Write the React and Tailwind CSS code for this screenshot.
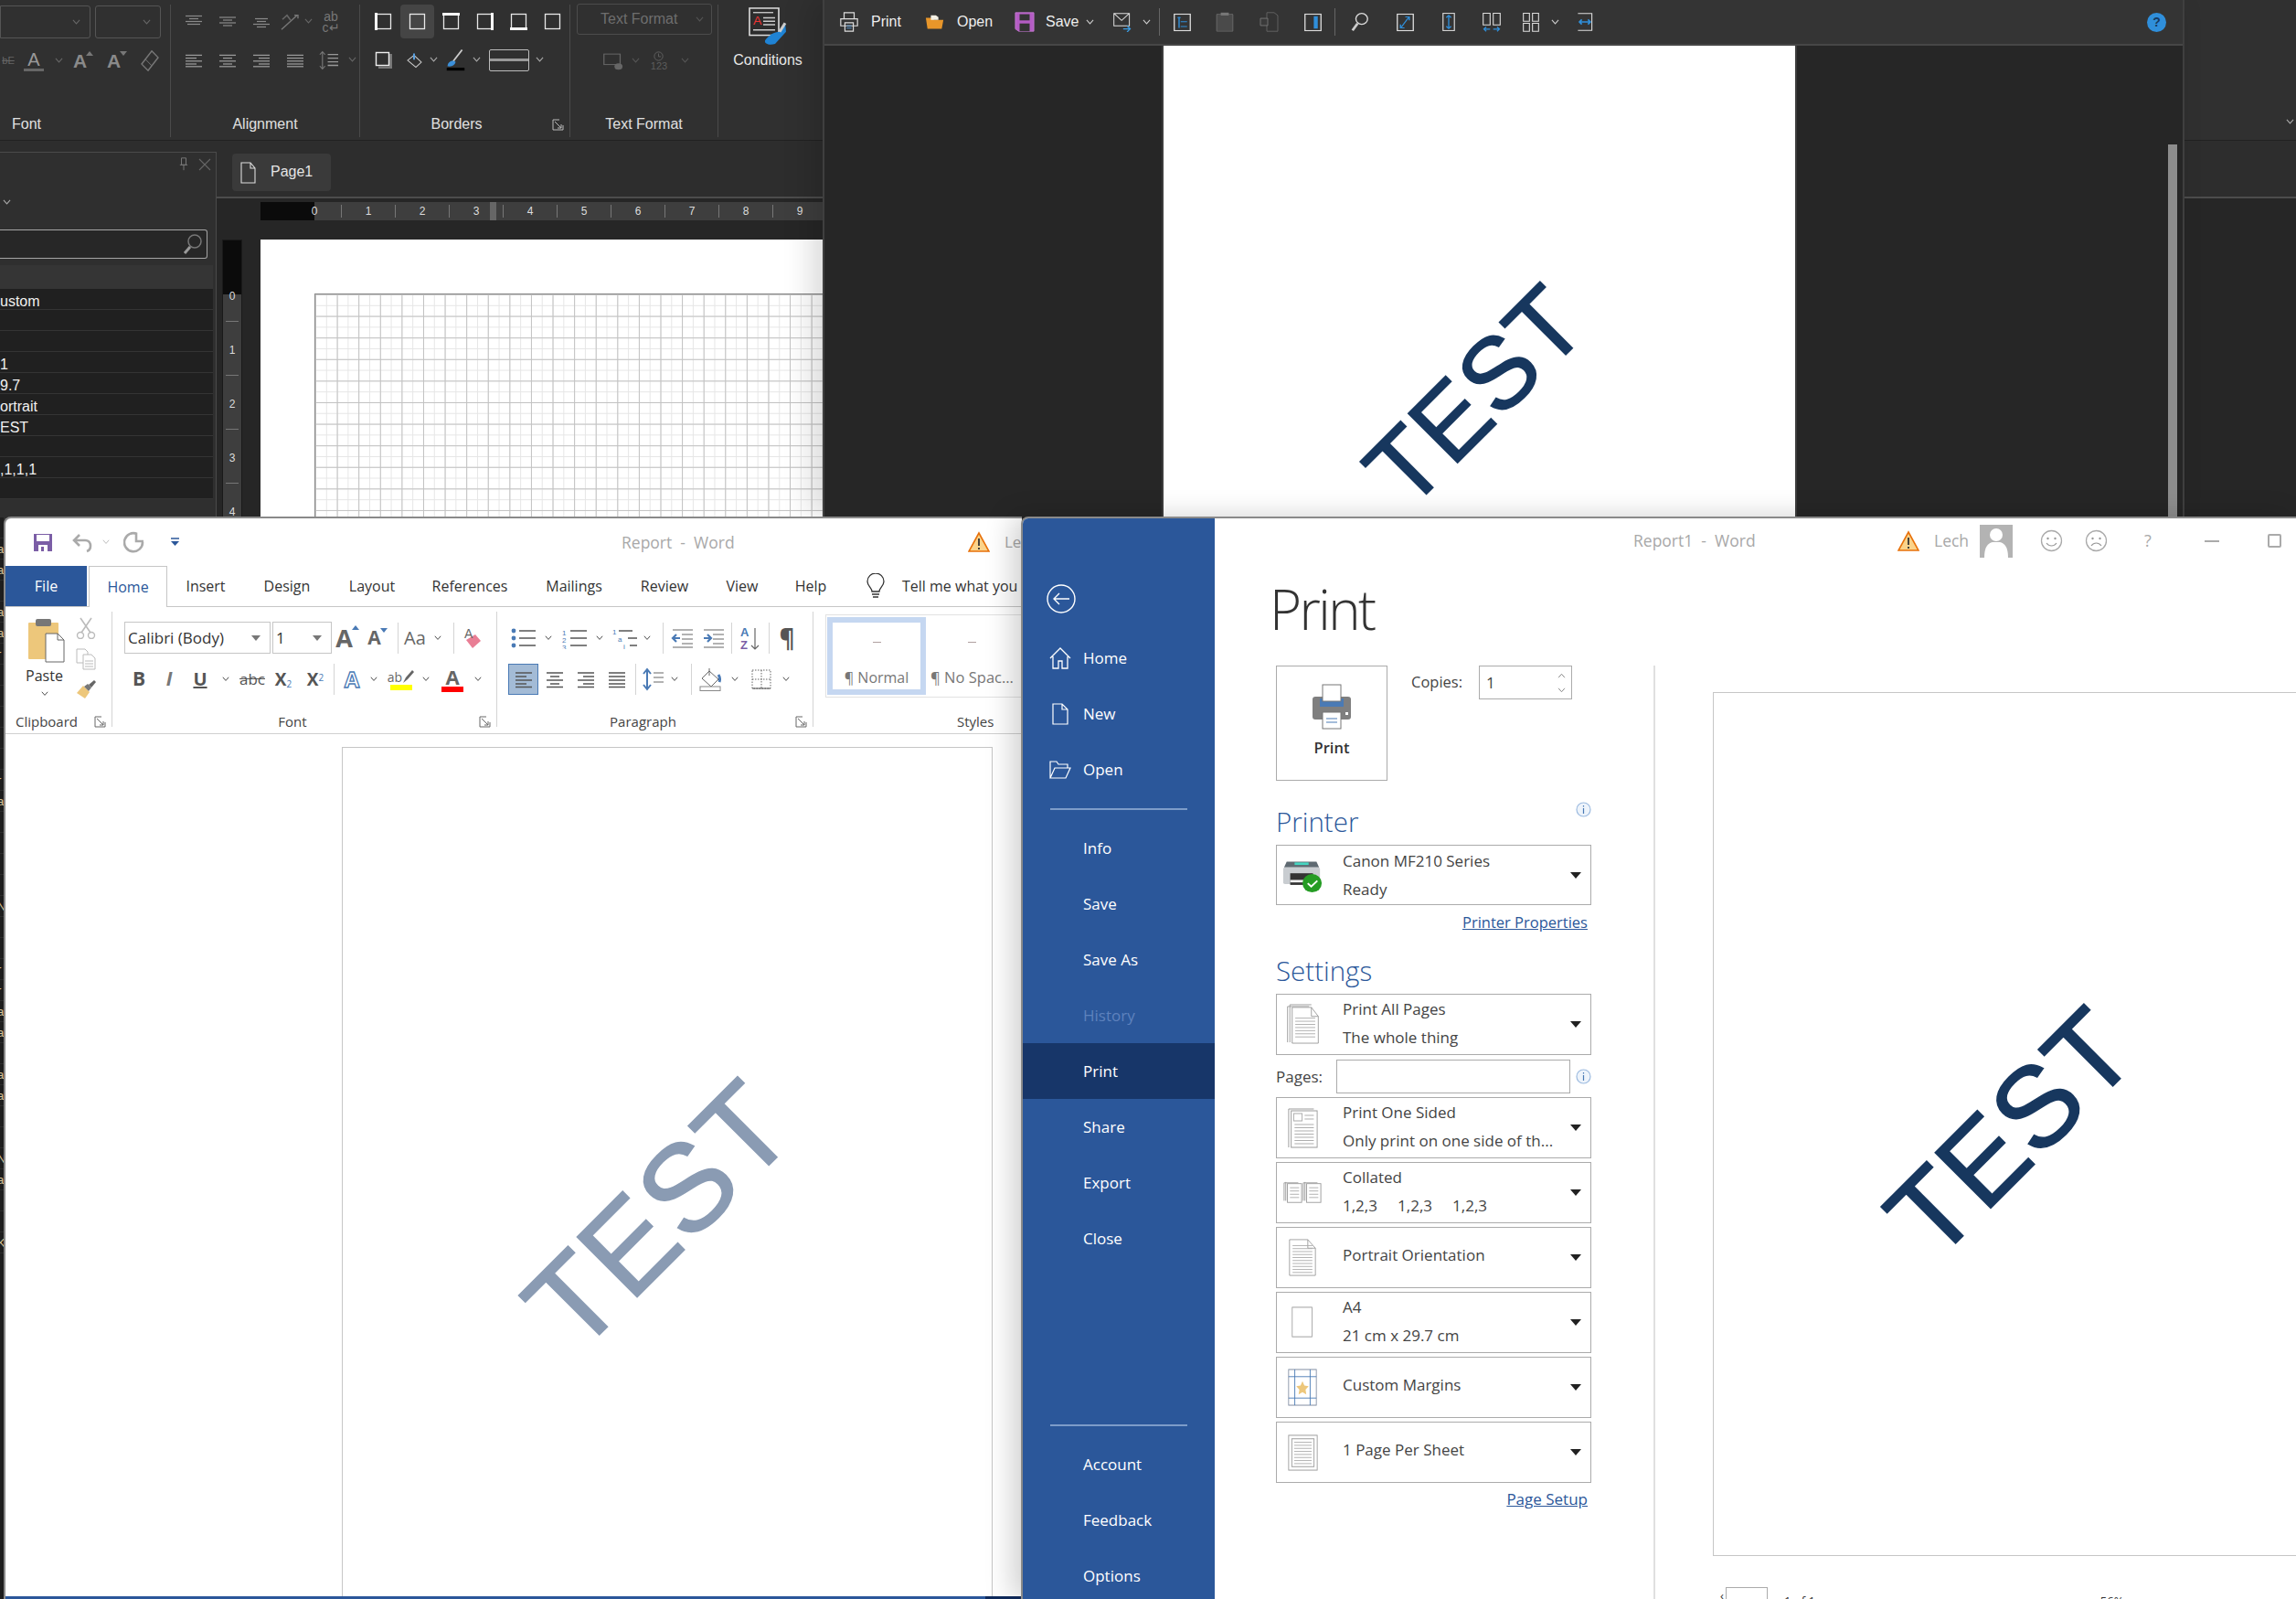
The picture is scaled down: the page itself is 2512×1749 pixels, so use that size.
import React from "react";

const Chev = ({ c = "#999", w = 9 }) => (
  <svg width={w} height={w * 0.7} viewBox="0 0 10 7" className="shrink-0"><path d="M1 1l4 4.5L9 1" fill="none" stroke={c} strokeWidth="1.2" /></svg>
);
const Cell = ({ w, children, className = "" }) => (
  <div className={`${w} h-full shrink-0 flex items-center justify-center ${className}`}>{children}</div>
);
const Lines = ({ rows, c = "#999", w = 22, h = 20, rh, sw = 1.6 }) => (
  <svg width={w} height={rh || h} viewBox={`0 0 ${w} ${h}`} preserveAspectRatio="none">
    {rows.map((r, i) => <path key={i} d={`M${r[0]} ${r[2]}H${r[1]}`} stroke={c} strokeWidth={sw} />)}
  </svg>
);
const aL = [[2, 20, 3], [2, 14, 7], [2, 20, 11], [2, 14, 15], [2, 20, 18.5]];
const aC = [[2, 20, 3], [6, 16, 7], [2, 20, 11], [6, 16, 15], [2, 20, 18.5]];
const aR = [[2, 20, 3], [8, 20, 7], [2, 20, 11], [8, 20, 15], [2, 20, 18.5]];
const aJ = [[2, 20, 3], [2, 20, 7], [2, 20, 11], [2, 20, 15], [2, 20, 18.5]];
const Launcher = ({ c = "#777" }) => (
  <svg width="13" height="13" viewBox="0 0 13 13"><path d="M1 12V1h7M3 3l7 7M10 6v4H6M1 12h11V7" fill="none" stroke={c} strokeWidth="1" /></svg>
);
const BorderBox = ({ bold = "" }) => (
  <svg width="19" height="19" viewBox="0 0 19 19"><rect x="1.5" y="1.5" width="16" height="16" fill="none" stroke="#e8e8e8" strokeWidth="1.3" />
    {bold === "l" && <path d="M1.5 0v19" stroke="#fff" strokeWidth="3" />}
    {bold === "t" && <path d="M0 1.5h19" stroke="#fff" strokeWidth="3" />}
    {bold === "b" && <path d="M0 17.5h19" stroke="#fff" strokeWidth="3" />}
    {bold === "r" && <path d="M17.5 0v19" stroke="#fff" strokeWidth="3" />}
  </svg>
);
const Sep = ({ h = "h-[36px]", c = "bg-[#d4d4d4]" }) => <div className={`w-px shrink-0 ${h} ${c}`} />;

const DGroup = ({ w, label, launcher, labelClass = "text-center", children }) => (
  <div className={`${w} h-[145px] shrink-0 border-r border-[#4a4a4a] flex flex-col relative`}>
    <div className="h-[118px] pt-[2px]">{children}</div>
    <div className="flex h-[26px] items-center text-[#e0e0e0] text-[16px]">
      <div className={`flex-1 ${labelClass}`}>{label}</div>
      {launcher && <div className="w-[26px] flex justify-center"><Launcher c="#bbb" /></div>}
    </div>
  </div>
);
const GrowA = ({ size, c = "#999", tri = "#4a7ab5", down }) => (
  <div className="flex items-start">
    <span className={`${size} leading-none font-bold`} style={{ color: c }}>A</span>
    <svg width="8" height="5" viewBox="0 0 8 5" className="-ml-[1px]"><path d={down ? "M0 0h8L4 5z" : "M4 0l4 5H0z"} fill={tri} /></svg>
  </div>
);

function DesignerRibbon() {
  return (
    <div className="h-[154px] bg-[#303030] border-b border-[#222] flex pt-[5px]">
      <DGroup w="w-[187px]" label="Font" labelClass="text-left pl-[13px]">
        <div className="flex h-[37px] gap-[5px] -mt-[1px]">
          <div className="w-[99px] h-[36px] border border-[#555] rounded-r-[3px] flex items-center justify-end pr-[10px]"><Chev c="#666" /></div>
          <div className="w-[72px] h-[36px] border border-[#555] rounded-[3px] flex items-center justify-end pr-[10px]"><Chev c="#666" /></div>
        </div>
        <div className="flex h-[37px] mt-[5px] items-center">
          <Cell w="w-[18px]"><span className="text-[#666] text-[11px] line-through">bE</span></Cell>
          <Cell w="w-[38px]">
            <div className="flex flex-col items-center text-[#999] text-[20px] leading-[20px]">A<div className="w-[22px] h-[3px] bg-[#666]" /></div>
          </Cell>
          <Cell w="w-[16px]"><Chev c="#666" /></Cell>
          <Cell w="w-[38px]"><GrowA size="text-[21px]" c="#8a8a8a" tri="#777" /></Cell>
          <Cell w="w-[36px]"><GrowA size="text-[21px]" c="#8a8a8a" tri="#777" down /></Cell>
          <Cell w="w-[36px]"><svg width="22" height="25" viewBox="0 0 22 28" preserveAspectRatio="none"><path d="M13 2l7 8L9 26l-7-8z" fill="none" stroke="#777" strokeWidth="1.5" /><path d="M6 12l7 8" stroke="#777" /></svg></Cell>
        </div>
      </DGroup>
      <DGroup w="w-[207px]" label="Alignment">
        <div className="flex h-[37px] pl-[6px] -mt-[2px]">
          <Cell w="w-[37px]"><Lines c="#8a8a8a" rh={15} rows={[[2, 20, 2], [6, 16, 6], [2, 20, 10], [4, 18, 14]]} /></Cell>
          <Cell w="w-[37px]"><Lines c="#8a8a8a" rh={15} rows={[[2, 20, 4], [6, 16, 8], [2, 20, 12], [6, 16, 16]]} /></Cell>
          <Cell w="w-[37px]"><Lines c="#8a8a8a" rh={15} rows={[[4, 18, 6], [6, 16, 10], [2, 20, 14], [6, 16, 18]]} /></Cell>
          <Cell w="w-[26px]"><svg width="22" height="20" viewBox="0 0 22 22" preserveAspectRatio="none"><path d="M2 20L19 3M16 3h4v4" fill="none" stroke="#777" strokeWidth="1.4" /><path d="M3 8l5-5 4 6" fill="none" stroke="#666" strokeWidth="1.6" /></svg></Cell>
          <Cell w="w-[14px]"><Chev c="#666" /></Cell>
          <Cell w="w-[36px]"><span className="text-[#777] text-[14px] leading-[12px] text-center">ab<br />c↵</span></Cell>
        </div>
        <div className="flex h-[37px] pl-[6px] mt-[5px]">
          <Cell w="w-[37px]"><Lines rh={16} rows={aL} /></Cell>
          <Cell w="w-[37px]"><Lines rh={16} rows={aC} /></Cell>
          <Cell w="w-[37px]"><Lines rh={16} rows={aR} /></Cell>
          <Cell w="w-[37px]"><Lines rh={16} rows={aJ} /></Cell>
          <Cell w="w-[37px]"><svg width="23" height="22" viewBox="0 0 24 28" preserveAspectRatio="none"><path d="M5 2v24M2 6l3-4 3 4M2 22l3 4 3-4" fill="none" stroke="#777" strokeWidth="1.2" /><path d="M11 6h12M11 11h12M11 16h12M11 21h12" stroke="#999" strokeWidth="1.6" /></svg></Cell>
          <Cell w="w-[14px]"><Chev c="#666" /></Cell>
        </div>
      </DGroup>
      <DGroup w="w-[230px]" label="Borders" launcher labelClass="text-center pl-[8px]">
        <div className="flex h-[37px] pl-[7px] -mt-[2px]">
          <Cell w="w-[37px]"><BorderBox bold="l" /></Cell>
          <Cell w="w-[37px]" className="bg-[#454545] rounded-[4px]"><BorderBox /></Cell>
          <Cell w="w-[37px]"><BorderBox bold="t" /></Cell>
          <Cell w="w-[37px]"><BorderBox bold="r" /></Cell>
          <Cell w="w-[37px]"><BorderBox bold="b" /></Cell>
          <Cell w="w-[37px]"><BorderBox /></Cell>
        </div>
        <div className="flex h-[37px] mt-[5px] pl-[7px]">
          <Cell w="w-[37px]"><svg width="19" height="19" viewBox="0 0 19 19"><path d="M17.5 3v15H4" fill="none" stroke="#777" strokeWidth="3" /><rect x="1.5" y="1.5" width="14" height="14" fill="none" stroke="#eee" strokeWidth="1.4" /></svg></Cell>
          <Cell w="w-[30px]"><svg width="18" height="18" viewBox="0 0 18 26" preserveAspectRatio="none"><path d="M9 5l8 11-6 8-9-11z" fill="none" stroke="#ccc" strokeWidth="1.2" /><path d="M9 2v10" stroke="#5aa0e0" strokeWidth="2" /></svg></Cell>
          <Cell w="w-[12px]"><Chev c="#aaa" /></Cell>
          <Cell w="w-[36px]"><svg width="23" height="25" viewBox="0 0 26 32" preserveAspectRatio="none"><path d="M21 2L10 18" stroke="#ccc" strokeWidth="2" /><path d="M3 25c0-6 6-10 10-6-1 4-4 7-10 6z" fill="#3b8fd9" /><rect x="2" y="27" width="22" height="4" fill="#000" /></svg></Cell>
          <Cell w="w-[10px]"><Chev c="#aaa" /></Cell>
          <div className="w-[44px] h-[24px] ml-[9px] self-center border border-[#bbb] rounded-[2px] flex items-center shrink-0"><div className="w-full h-[3px] bg-[#999]" /></div>
          <Cell w="w-[22px]"><Chev c="#aaa" /></Cell>
        </div>
      </DGroup>
      <DGroup w="w-[162px]" label="Text Format">
        <div className="ml-[7px] w-[148px] h-[34px] mt-[-3px] border border-[#4c4c4c] rounded-[3px] flex items-center justify-between pl-[25px] pr-[8px] text-[#6e6e6e] text-[16px]">Text Format<Chev c="#555" /></div>
        <div className="flex h-[37px] mt-[10px] pl-[26px]">
          <Cell w="w-[40px]"><svg width="23" height="20" viewBox="0 0 26 28" preserveAspectRatio="none"><rect x="2" y="3" width="20" height="16" fill="none" stroke="#666" strokeWidth="1.4" /><ellipse cx="20" cy="22" rx="5" ry="5" fill="#666" /></svg></Cell>
          <Cell w="w-[10px]"><Chev c="#555" /></Cell>
          <Cell w="w-[42px]"><div className="flex flex-col items-center text-[#5c5c5c] text-[11px] leading-[10px]"><svg width="13" height="11" viewBox="0 0 13 13"><circle cx="6.5" cy="6.5" r="5.5" fill="none" stroke="#666" /><path d="M6.5 3v4h3" fill="none" stroke="#666" /></svg>123</div></Cell>
          <Cell w="w-[14px]"><Chev c="#555" /></Cell>
        </div>
      </DGroup>
      <div className="w-[114px] shrink-0 flex flex-col items-center text-[#e8e8e8] text-[16px] pt-[3px] -ml-[3px]">
        <svg width="44" height="42" viewBox="0 0 44 44" preserveAspectRatio="none">
          <rect x="2" y="1" width="32" height="31" fill="#2d2d2d" stroke="#ddd" strokeWidth="1.6" />
          <path d="M6 6h22" stroke="#ccc" strokeWidth="1.4" /><text x="6" y="20" fontSize="14" fill="#e33" fontFamily="Liberation Sans">A</text>
          <path d="M17 12h13M17 16h13M17 20h13M6 26h24" stroke="#ccc" strokeWidth="1.6" />
          <path d="M41 18l1 10-12 14c-6 2-12 0-11-4 4-6 10-10 16-10z" fill="#1f83d4" /><path d="M41 18l-6 10" stroke="#ccc" strokeWidth="3" />
        </svg>
        <div className="mt-[4px]">Conditions</div>
      </div>
    </div>
  );
}

const panelRows = ["ustom", "", "", "1", "9.7", "ortrait", "EST", "", ",1,1,1", ""];

function Designer() {
  return (
    <div className="absolute left-0 top-0 w-[2512px] h-[1000px] bg-[#2d2d2d] font-['Liberation_Sans',sans-serif]">
      <DesignerRibbon />
      <div className="flex">
        <div className="w-[237px] shrink-0 mt-[12px] h-[800px] border-t border-r border-[#4a4a4a] bg-[#2f2f2f]">
          <div className="h-[25px] flex items-center justify-end pr-[5px] gap-[10px]">
            <svg width="12" height="15" viewBox="0 0 12 18"><path d="M3 1h6v9H3zM1 10h10M6 10v7" fill="none" stroke="#777" strokeWidth="1.2" /></svg>
            <svg width="14" height="14" viewBox="0 0 14 14"><path d="M1 1l12 12M13 1L1 13" stroke="#666" strokeWidth="1.1" /></svg>
          </div>
          <div className="h-[30px] pl-[3px] mt-[14px] flex items-center"><Chev c="#aaa" /></div>
          <div className="mt-[15px] mr-[9px] h-[32px] border border-l-0 border-[#a5a5a5] rounded-r-[3px] bg-[#272727] flex items-center justify-end pr-[3px]">
            <svg width="24" height="24" viewBox="0 0 24 24"><circle cx="14" cy="9" r="7" fill="none" stroke="#777" strokeWidth="1.5" /><path d="M9 15l-6 7" stroke="#999" strokeWidth="3" /></svg>
          </div>
          <div className="mt-[7px] mr-[3px] h-[26px] bg-[#353535]" />
          <div className="mr-[3px] bg-[#202020] text-[#f0f0f0] text-[16px]">
            {panelRows.map((r, i) => (
              <div key={i} className="h-[23px] border-b border-[#343434] leading-[27px] whitespace-nowrap">{r}</div>
            ))}
          </div>
        </div>
        <div className="flex-1 flex flex-col min-w-0">
          <div className="h-[63px] pl-[17px] pt-[14px] border-b-2 border-[#4c4c4c]">
            <div className="w-[108px] h-[41px] bg-[#3a3a3a] rounded-[4px] flex items-center pl-[9px] gap-[16px] text-[#e4e4e4] text-[16px]">
              <svg width="17" height="24" viewBox="0 0 17 24"><path d="M1 1h10l5 6v16H1zM11 1v6h5" fill="none" stroke="#ddd" strokeWidth="1.1" /></svg>
              <span className="-mt-[2px]">Page1</span>
            </div>
          </div>
          <div className="flex-1 bg-[#262626] pt-[4px]">
            <div className="ml-[48px] w-[660px] h-[20px] flex overflow-hidden text-[#ddd] text-[12px] bg-[#3e3e3e]">
              <div className="w-[59px] h-full bg-[#0b0b0b] shrink-0" />
              {[0, 1, 2, 3, 4, 5, 6, 7, 8, 9, 10].map((n) => (
                <div key={n} className="w-[59px] shrink-0 h-full relative flex items-center justify-center">
                  <div className="w-px h-[14px] bg-[#777]" />
                  <span className="absolute left-0 -translate-x-1/2">{n}</span>
                  {n === 3 && <div className="absolute left-[15px] top-0 w-[7px] h-full bg-[#666]" />}
                </div>
              ))}
            </div>
            <div className="flex mt-[21px]">
              <div className="ml-[6px] w-[22px] shrink-0 flex flex-col text-[#ddd] text-[12px] bg-[#3e3e3e] h-[320px] border border-[#1a1a1a]">
                <div className="h-[59px] bg-[#0b0b0b] shrink-0" />
                {[0, 1, 2, 3, 4].map((n) => (
                  <div key={n} className="h-[59px] shrink-0 relative flex items-center justify-center">
                    <div className="h-px w-[14px] bg-[#777]" />
                    <span className="absolute top-0 -translate-y-1/2 mt-[2px]">{n}</span>
                  </div>
                ))}
              </div>
              <div className="ml-[20px] w-[660px] shrink-0 h-[320px] bg-white pl-[59px] pt-[59px]">
                <div className="w-full h-full border-t border-l border-[#8a8a8a] bg-[linear-gradient(to_right,#c2c2c2_1px,transparent_1px),linear-gradient(to_bottom,#c2c2c2_1px,transparent_1px),linear-gradient(to_right,#e6e6e6_1px,transparent_1px),linear-gradient(to_bottom,#e6e6e6_1px,transparent_1px)] bg-[size:23.6px_23.6px,23.6px_23.6px,11.8px_11.8px,11.8px_11.8px]" />
              </div>
            </div>
          </div>
        </div>
      </div>
      <div className="absolute right-[2px] top-[130px]"><Chev c="#aaa" /></div>
    </div>
  );
}

const Blue = "#2f8fdb";
const V = ({ vb, w = 22, h = 22, children }) => (
  <svg width={w} height={h} viewBox={vb} preserveAspectRatio="none">{children}</svg>
);
const Rect = ({ c = "#ddd", children }) => (
  <V vb="0 0 24 28" w={21} h={21}>
    <rect x="2" y="2" width="20" height="24" fill="none" stroke={c} strokeWidth="1.5" />
    {children}
  </V>
);

function Viewer() {
  return (
    <div className="absolute left-[900px] top-0 w-[1490px] h-[566px] bg-[#262626] border-l-2 border-r-2 border-[#3f3f3f] shadow-[-12px_0_30px_rgba(0,0,0,0.15)] flex flex-col font-['Liberation_Sans',sans-serif]">
      <div className="h-[50px] shrink-0 bg-[#343434] border-b-2 border-[#464646] flex items-center text-[#eee] text-[16px]">
        <Cell w="w-[28px]" className="ml-[13px]"><V vb="0 0 24 26"><path d="M6 9V1h12v8M2 9h20v9H2zM7 14h10v11H7z" fill="#343434" stroke="#ddd" strokeWidth="1.3" /><path d="M9 18h6M9 21h6" stroke="#5aa0e0" /></V></Cell>
        <span className="ml-[10px] w-[50px]">Print</span>
        <Cell w="w-[26px]" className="ml-[7px]"><V vb="0 0 24 24" w={22} h={17}><path d="M1 5h8l2 3h11l-2 14H3z" fill="#e8962a" /><path d="M7 1h6l3 3v4H7z" fill="#f4f0e4" /></V></Cell>
        <span className="ml-[11px] w-[54px]">Open</span>
        <Cell w="w-[28px]" className="ml-[6px]"><V vb="0 0 24 26"><path d="M1 1h22v24H5l-4-3z" fill="#b45cc4" stroke="#c57bd0" /><rect x="6" y="3" width="12" height="8" fill="#343434" /><rect x="6" y="15" width="12" height="10" fill="#343434" /></V></Cell>
        <span className="ml-[9px] w-[36px]">Save</span>
        <Cell w="w-[13px]" className="ml-[6px]"><Chev c="#ccc" /></Cell>
        <Cell w="w-[28px]" className="ml-[15px]"><V vb="0 0 26 26"><path d="M2 2h20v16H2zM2 2l10 9 10-9" fill="none" stroke="#ddd" strokeWidth="1.2" /><path d="M14 22h8M19 18l4 4-4 4" fill="none" stroke="#3b9be0" strokeWidth="1.6" /></V></Cell>
        <Cell w="w-[14px]" className="ml-[5px]"><Chev c="#ccc" /></Cell>
        <div className="w-px h-[30px] bg-[#666] ml-[7px]" />
        <Cell w="w-[46px]" className="ml-[1px]"><Rect><path d="M8 6v16M6 7h4M10 13h8M10 20h8" stroke={Blue} strokeWidth="1.6" fill="none" /></Rect></Cell>
        <Cell w="w-[48px]"><V vb="0 0 20 28"><rect x="2" y="3" width="16" height="24" rx="1" fill="#4a4a4a" stroke="#666" /><rect x="6" y="1" width="8" height="4" fill="#777" /></V></Cell>
        <Cell w="w-[48px]"><V vb="0 0 22 28"><path d="M9 1h8l4 4v22H9z" fill="none" stroke="#666" /><path d="M2 9h8v10H2z" fill="#3a3a3a" stroke="#777" /></V></Cell>
        <Cell w="w-[48px]"><Rect><rect x="13" y="5" width="5" height="18" fill={Blue} /></Rect></Cell>
        <div className="w-px h-[30px] bg-[#666]" />
        <Cell w="w-[48px]" className="ml-[3px]"><V vb="0 0 24 26"><circle cx="14" cy="9" r="7" fill="none" stroke="#ddd" strokeWidth="1.5" /><path d="M9 15l-6 9" stroke="#ccc" strokeWidth="3" /></V></Cell>
        <Cell w="w-[50px]"><Rect><path d="M7 21l9-14M12 6h5v5M6 17v5h5" fill="none" stroke={Blue} strokeWidth="1.6" /></Rect></Cell>
        <Cell w="w-[46px]"><V vb="0 0 18 28" w={16}><rect x="2" y="2" width="14" height="24" fill="none" stroke="#ddd" strokeWidth="1.3" /><path d="M9 5v18M6 8l3-3 3 3M6 20l3 3 3-3" fill="none" stroke={Blue} strokeWidth="1.5" /></V></Cell>
        <Cell w="w-[47px]"><V vb="0 0 26 28"><path d="M2 2h9v16H2zM15 2h9v16h-9z" fill="none" stroke="#ddd" strokeWidth="1.3" /><path d="M3 24h8M6 21l-3 3 3 3M15 24h8M20 21l3 3-3 3" fill="none" stroke={Blue} strokeWidth="1.5" /></V></Cell>
        <Cell w="w-[40px]"><V vb="0 0 24 28" w={20}><path d="M2 2h8v11H2zM14 2h8v11h-8zM2 16h8v11H2zM14 16h8v11h-8z" fill="none" stroke="#ddd" strokeWidth="1.3" /></V></Cell>
        <Cell w="w-[12px]"><Chev c="#ccc" /></Cell>
        <Cell w="w-[54px]"><V vb="0 0 26 26"><path d="M4 2h18v22H4" fill="none" stroke="#ddd" strokeWidth="1.3" /><path d="M6 13h14M9 10l-3 3 3 3M17 10l3 3-3 3" fill="none" stroke={Blue} strokeWidth="2" /></V></Cell>
        <div className="ml-auto mr-[18px] w-[21px] h-[21px] rounded-full bg-[#2f8fdb] text-[#16395f] text-[14px] font-bold flex items-center justify-center">?</div>
      </div>
      <div className="flex-1 flex pl-[369px] relative">
        <div className="w-[695px] h-full bg-white relative border-x-2 border-[#3c3c3c] overflow-hidden">
          <div className="absolute left-[341px] top-[384px] -translate-x-1/2 -translate-y-1/2 -rotate-45 text-[111px] leading-none text-[#17375e] [-webkit-text-stroke:1.5px_#17375e] whitespace-nowrap">TEST</div>
        </div>
        <div className="ml-[406px] w-[10px] h-[407px] mt-[108px] bg-[#8d8d8d]" />
      </div>
    </div>
  );
}

/* Word ribbon ------------------------------------------------------------ */
const WChev = () => <Chev c="#444" w={8} />;
const Combo = ({ w, text }) => (
  <div className={`${w} h-[35px] shrink-0 border border-[#c6c6c6] flex items-center pl-[3px] pr-[10px] justify-between text-[17px] text-[#333] bg-white`}>
    <span>{text}</span>
    <svg width="10" height="6" viewBox="0 0 10 6"><path d="M0 0h10L5 6z" fill="#777" /></svg>
  </div>
);
const WGroup = ({ w, label, launcher, children }) => (
  <div className={`${w} h-[126px] shrink-0 border-r border-[#d4d4d4] flex flex-col`}>
    <div className="flex-1 pt-[11px] min-h-0">{children}</div>
    <div className="flex items-center h-[14px] -mb-[1px] text-[15px] leading-[14px] text-[#444]">
      <div className="flex-1 text-center whitespace-nowrap">{label}</div>
      {launcher && <div className="w-[26px] flex justify-center"><Launcher c="#666" /></div>}
    </div>
  </div>
);
const Warn = () => (
  <svg width="24" height="24" viewBox="0 0 24 24" className="shrink-0"><path d="M12 2L23 22H1z" fill="#fbd38a" stroke="#e8710a" strokeWidth="1.6" /><path d="M12 8v8M12 18v2" stroke="#333" strokeWidth="1.8" /></svg>
);
const ListI = ({ kind }) => (
  <svg width="30" height="24" viewBox="0 0 30 24">
    {kind === "b" && <><circle cx="4" cy="4" r="2.4" fill="#4a7ab5" /><circle cx="4" cy="12" r="2.4" fill="#4a7ab5" /><circle cx="4" cy="20" r="2.4" fill="#4a7ab5" /></>}
    {kind === "n" && <text x="1" y="9" fontSize="8" fill="#4a7ab5" fontFamily="Liberation Sans"><tspan x="1" dy="0">1</tspan><tspan x="1" dy="8">2</tspan><tspan x="1" dy="8">3</tspan></text>}
    {kind === "m" && <text x="1" y="8" fontSize="8" fill="#4a7ab5" fontFamily="Liberation Sans"><tspan x="1" dy="0">1</tspan><tspan x="7" dy="8">a</tspan><tspan x="13" dy="8">i</tspan></text>}
    <path d={kind === "m" ? "M8 4h15M18 12h10M20 20h8" : "M10 4h18M10 12h18M10 20h18"} stroke="#555" strokeWidth="1.3" />
  </svg>
);
const Indent = ({ dir }) => (
  <svg width="24" height="24" viewBox="0 0 24 24">
    <path d="M2 3h22M12 8h12M12 13h12M12 18h12M2 22h22" stroke="#666" strokeWidth="1.2" />
    <path d={dir === "l" ? "M10 12H2M6 8l-4 4 4 4" : "M2 12h8M6 8l4 4-4 4"} fill="none" stroke="#4a7ab5" strokeWidth="2.2" />
  </svg>
);

function WordRibbon() {
  return (
    <div className="h-[139px] border-b border-[#d0d0d0] flex pt-[5px] bg-white">
      <WGroup w="w-[117px]" label="Clipboard" launcher>
        <div className="flex -mt-[5px]">
          <div className="w-[77px] pl-[12px] flex flex-col items-center shrink-0">
            <svg width="42" height="50" viewBox="0 0 42 50" className="shrink-0">
              <rect x="1" y="6" width="33" height="40" rx="1" fill="#edc77b" />
              <rect x="9" y="2" width="17" height="8" rx="2" fill="#777" />
              <path d="M20 18h13l7 7v24H20z" fill="#fff" stroke="#666" strokeWidth="1" /><path d="M33 18v7h7" fill="none" stroke="#666" />
            </svg>
            <div className="text-[16px] text-[#333] mt-[2px] -ml-[4px]">Paste</div>
            <div className="mt-[5px] -ml-[4px]"><WChev /></div>
          </div>
          <div className="flex flex-col items-center w-[22px] gap-[10px]">
            <svg width="22" height="24" viewBox="0 0 22 24"><circle cx="5" cy="20" r="3.5" fill="none" stroke="#bbb" strokeWidth="1.4" /><circle cx="17" cy="20" r="3.5" fill="none" stroke="#bbb" strokeWidth="1.4" /><path d="M6 17L17 1M16 17L5 1" stroke="#bbb" strokeWidth="1.6" /></svg>
            <svg width="22" height="24" viewBox="0 0 22 24"><path d="M1 1h9l3 3v12H1z" fill="#fff" stroke="#bbb" /><path d="M8 7h9l4 4v12H8z" fill="#fff" stroke="#bbb" /><path d="M10 14h9M10 17h9M10 20h9" stroke="#bbb" /></svg>
            <svg width="24" height="22" viewBox="0 0 24 22"><path d="M2 15l7-8 7 7-5 7z" fill="#edc77b" /><path d="M10 8l4-3 4 4-3 4z" fill="#777" /><path d="M15 6l6-5 2 2-5 6z" fill="#666" /></svg>
          </div>
        </div>
      </WGroup>
      <WGroup w="w-[421px]" label="Font" launcher>
        <div className="flex h-[35px] pl-[13px] items-center">
          <Combo w="w-[160px]" text="Calibri (Body)" />
          <Combo w="w-[65px] ml-[2px]" text="1" />
          <Cell w="w-[34px]"><GrowA size="text-[27px]" c="#666" /></Cell>
          <Cell w="w-[32px]"><GrowA size="text-[21px]" c="#666" down /></Cell>
          <div className="w-[6px]" /><Sep h="h-[34px]" />
          <Cell w="w-[36px]"><span className="text-[20px] text-[#666]">Aa</span></Cell>
          <Cell w="w-[14px]"><WChev /></Cell>
          <div className="w-[10px]" /><Sep h="h-[34px]" />
          <Cell w="w-[40px]"><svg width="20" height="24" viewBox="0 0 20 24"><path d="M3 14L13 8l6 7-9 8z" fill="#e97e95" /><text x="1" y="12" fontSize="14" fill="#666" fontFamily="Liberation Sans">A</text></svg></Cell>
        </div>
        <div className="flex h-[36px] mt-[10px] pl-[13px] items-center text-[#555]">
          <Cell w="w-[32px]"><span className="text-[21px] font-bold">B</span></Cell>
          <Cell w="w-[34px]"><span className="text-[21px] italic font-bold text-[#777]">I</span></Cell>
          <Cell w="w-[34px]"><span className="text-[20px] font-bold underline">U</span></Cell>
          <Cell w="w-[22px]"><WChev /></Cell>
          <Cell w="w-[36px]"><span className="text-[17px] line-through">abc</span></Cell>
          <Cell w="w-[32px]"><span className="text-[19px] font-bold">X<sub className="text-[10px] text-[#4a7ab5] font-normal">2</sub></span></Cell>
          <Cell w="w-[38px]"><span className="text-[19px] font-bold">X<sup className="text-[10px] text-[#4a7ab5] font-normal">2</sup></span></Cell>
          <div className="w-px" /><Sep h="h-[34px]" />
          <Cell w="w-[38px]"><span className="text-[24px] font-bold text-white [-webkit-text-stroke:1.3px_#4a7ab5]">A</span></Cell>
          <Cell w="w-[10px]"><WChev /></Cell>
          <Cell w="w-[50px]"><div className="flex flex-col items-center"><div className="flex items-end h-[17px]"><span className="text-[14px] leading-[14px] text-[#666]">ab</span><svg width="14" height="16" viewBox="0 0 14 16"><path d="M1 15l3-6 7-8 2 2-7 8z" fill="#666" /></svg></div><div className="w-[24px] h-[6px] bg-[#ffff00] mt-[1px]" /></div></Cell>
          <Cell w="w-[4px]"><WChev /></Cell>
          <Cell w="w-[54px]"><div className="flex flex-col items-center"><span className="text-[22px] leading-[22px] font-bold text-[#666]">A</span><div className="w-[24px] h-[6px] bg-[#ff0000]" /></div></Cell>
          <Cell w="w-[2px]"><WChev /></Cell>
        </div>
      </WGroup>
      <WGroup w="w-[346px]" label="Paragraph" launcher>
        <div className="flex h-[35px] pl-[14px] items-center">
          <Cell w="w-[30px]"><ListI kind="b" /></Cell>
          <Cell w="w-[24px]"><WChev /></Cell>
          <Cell w="w-[34px]"><ListI kind="n" /></Cell>
          <Cell w="w-[20px]"><WChev /></Cell>
          <Cell w="w-[36px]"><ListI kind="m" /></Cell>
          <Cell w="w-[12px]"><WChev /></Cell>
          <div className="w-[11px]" /><Sep h="h-[34px]" />
          <Cell w="w-[40px]"><Indent dir="l" /></Cell>
          <Cell w="w-[28px]"><Indent dir="r" /></Cell>
          <div className="w-[6px]" /><Sep h="h-[34px]" />
          <Cell w="w-[40px]"><svg width="22" height="28" viewBox="0 0 22 28"><text x="0" y="12" fontSize="13" fontWeight="bold" fill="#4a7ab5" fontFamily="Liberation Sans">A</text><text x="0" y="26" fontSize="13" fontWeight="bold" fill="#7b5ea6" fontFamily="Liberation Sans">Z</text><path d="M16 3v23M12 22l4 4 4-4" fill="none" stroke="#666" strokeWidth="1.2" /></svg></Cell>
          <Sep h="h-[34px]" />
          <Cell w="w-[38px]"><span className="text-[26px] font-bold text-[#555] leading-none">¶</span></Cell>
        </div>
        <div className="flex h-[36px] mt-[10px] pl-[12px] items-center">
          <div className="w-[33px] h-[34px] bg-[#a3bbd6] border border-[#4a7ab5] flex items-center justify-center shrink-0"><Lines c="#555" rows={aL} /></div>
          <Cell w="w-[36px]"><Lines c="#555" rows={aC} sw={1.3} /></Cell>
          <Cell w="w-[32px]"><Lines c="#555" rows={aR} sw={1.3} /></Cell>
          <Cell w="w-[36px]"><Lines c="#555" rows={aJ} sw={1.3} /></Cell>
          <div className="w-[2px]" /><Sep h="h-[34px]" />
          <Cell w="w-[38px]"><svg width="24" height="26" viewBox="0 0 24 26"><path d="M5 2v22M1 7l4-5 4 5M1 19l4 5 4-5" fill="none" stroke="#4a7ab5" strokeWidth="2" /><path d="M12 6h11M12 11h11M12 16h11" stroke="#666" /></svg></Cell>
          <Cell w="w-[8px]"><WChev /></Cell>
          <div className="w-[14px]" /><Sep h="h-[34px]" />
          <Cell w="w-[40px]"><svg width="26" height="26" viewBox="0 0 26 26"><path d="M12 4l10 9-8 8-10-9z" fill="none" stroke="#666" /><path d="M12 1v8" stroke="#666" /><path d="M22 8c2 3 2 5 1 8" stroke="#4a7ab5" strokeWidth="3" fill="none" /><rect x="2" y="21" width="22" height="4.5" fill="none" stroke="#888" /></svg></Cell>
          <Cell w="w-[14px]"><WChev /></Cell>
          <Cell w="w-[44px]"><svg width="24" height="24" viewBox="0 0 24 24"><path d="M2 2h20v20H2zM12 2v20M2 12h20" fill="none" stroke="#666" strokeWidth="1" strokeDasharray="1.5 1.5" /><path d="M2 22h20" stroke="#555" /></svg></Cell>
          <Cell w="w-[10px]"><WChev /></Cell>
        </div>
      </WGroup>
      <div className="w-[228px] shrink-0 flex flex-col">
        <div className="ml-[13px] mt-[3px] h-[91px] border border-[#e2e2e2] border-r-0 flex items-start pt-[2px] pl-[1px]">
          <div className="w-[108px] h-[85px] shrink-0 border-[6px] border-[#c5d7f1] flex flex-col items-center">
            <div className="mt-[21px] h-px w-[9px] bg-[#b0a0a0]" />
            <div className="mt-[26px] text-[16px] text-[#777] whitespace-nowrap">¶ Normal</div>
          </div>
          <div className="ml-[3px] h-[85px] flex flex-col items-center w-[95px] shrink-0">
            <div className="mt-[27px] h-px w-[9px] bg-[#b0a0a0]" />
            <div className="mt-[26px] text-[16.5px] text-[#777] whitespace-nowrap">¶ No Spac...</div>
          </div>
        </div>
        <div className="mt-[19px] text-[15px] leading-[14px] text-[#444] pl-[157px]">Styles</div>
      </div>
    </div>
  );
}

const tabs = [["Insert", "w-[84px]"], ["Design", "w-[94px]"], ["Layout", "w-[92px]"], ["References", "w-[122px]"], ["Mailings", "w-[106px]"], ["Review", "w-[92px]"], ["View", "w-[78px]"], ["Help", "w-[72px]"]];

function WordDoc() {
  return (
    <div className="absolute left-[4px] top-[565px] w-[1114px] h-[1184px] bg-white border-l-2 border-t-2 border-[#8a8a8a] rounded-tl-[8px] overflow-hidden flex flex-col font-['Open_Sans',sans-serif]">
      <div className="h-[52px] shrink-0 flex items-center">
        <Cell w="w-[20px]" className="ml-[31px]"><svg width="20" height="20" viewBox="0 0 20 20"><path d="M0 1h20v19H0z" fill="#7b5ea6" /><rect x="3" y="2" width="14" height="7" fill="#fff" /><rect x="5" y="13" width="10" height="7" fill="#fff" /><rect x="8" y="15" width="3" height="5" fill="#7b5ea6" /></svg></Cell>
        <Cell w="w-[24px]" className="ml-[21px]"><svg width="24" height="24" viewBox="0 0 24 24"><path d="M9 4L3 10l6 6M3 10h12c5 0 6 4 6 6s-1 5-4 6" fill="none" stroke="#aaa" strokeWidth="2.6" /></svg></Cell>
        <Cell w="w-[12px]" className="ml-[8px]"><Chev c="#bbb" w={8} /></Cell>
        <Cell w="w-[24px]" className="ml-[13px]"><svg width="24" height="24" viewBox="0 0 24 24"><path d="M15 3a10 10 0 1 0 6 9M14 2v9h8" fill="none" stroke="#aaa" strokeWidth="2.6" /></svg></Cell>
        <Cell w="w-[12px]" className="ml-[26px]"><svg width="11" height="10" viewBox="0 0 11 10"><path d="M1 1h9" stroke="#2b579a" strokeWidth="1.4" /><path d="M1 4h9L5.5 9z" fill="#2b579a" /></svg></Cell>
        <div className="ml-[483px] w-[379px] shrink-0 text-[#a8a8a8] text-[17.5px] whitespace-pre">Report  -  Word</div>
        <Warn />
        <div className="ml-[16px] text-[#a8a8a8] text-[17px] shrink-0">Lech</div>
      </div>
      <div className="h-[45px] shrink-0 flex border-b border-[#c6c6c6] text-[16px] text-[#333]">
        <div className="w-[89px] h-[44px] bg-[#2b579a] text-white flex items-center justify-center shrink-0">File</div>
        <div className="w-[86px] h-[45px] ml-[2px] border border-b-0 border-[#c6c6c6] bg-white text-[#2b579a] flex items-center justify-center shrink-0">Home</div>
        {tabs.map(([t, w]) => <Cell key={t} w={w}>{t}</Cell>)}
        <div className="ml-[18px] w-[34px] flex items-center justify-center shrink-0"><svg width="20" height="28" viewBox="0 0 20 28"><path d="M6 20c0-4-5-6-5-11a9 9 0 0 1 18 0c0 5-5 7-5 11z" fill="none" stroke="#333" strokeWidth="1.3" /><path d="M6 23h8M7 26h6" stroke="#333" strokeWidth="1.5" /></svg></div>
        <div className="ml-[12px] flex items-center whitespace-nowrap shrink-0">Tell me what you</div>
      </div>
      <WordRibbon />
      <div className="flex-1 pl-[368px] pt-[14px] min-h-0">
        <div className="w-[712px] h-full border-t border-x border-[#c6c6c6] relative overflow-hidden">
          <div className="absolute left-[345px] top-[512px] -translate-x-1/2 -translate-y-1/2 -rotate-45 text-[135px] leading-none text-[#8a9bb3] [-webkit-text-stroke:1.5px_#8a9bb3] font-['Liberation_Sans',sans-serif] whitespace-nowrap">TEST</div>
        </div>
      </div>
      <div className="h-[3px] shrink-0 flex"><div className="flex-1 bg-[#2b579a]" /><div className="w-[40px] bg-[#0f2a5c]" /></div>
    </div>
  );
}

/* Backstage ---------------------------------------------------------------- */
const Side = ({ label, icon, active, dim }) => (
  <div className={`h-[61px] flex items-center pl-[29px] gap-[13px] text-[17px] ${active ? "bg-[#173669]" : ""} ${dim ? "text-[#5e82bd]" : "text-white"}`}>
    <div className="w-[24px] flex justify-center">{icon}</div>
    <span>{label}</span>
  </div>
);
const DocLines = ({ x1 = 8, x2 = 34, y1 = 14, y2 = 42, step = 3.5 }) => {
  const a = [];
  for (let y = y1; y <= y2; y += step) a.push(<path key={y} d={`M${x1} ${y}H${x2}`} stroke="#aaa" strokeWidth="1" />);
  return <>{a}</>;
};
const SettingBox = ({ icon, l1, l2 }) => (
  <div className="w-[345px] h-[67px] shrink-0 border border-[#ababab] flex items-center text-[17px] text-[#444]">
    <div className="w-[56px] shrink-0 mr-[16px] flex justify-center">{icon}</div>
    <div className={`flex-1 leading-[31px] whitespace-pre ${l2 ? "-mt-[3px]" : "-mt-[6px]"}`}>{l1}{l2 && <><br />{l2}</>}</div>
    <svg className="mr-[10px] shrink-0" width="12" height="7" viewBox="0 0 12 7"><path d="M0 0h12L6 7z" fill="#222" /></svg>
  </div>
);
const Info = () => (
  <svg width="17" height="17" viewBox="0 0 17 17"><circle cx="8.5" cy="8.5" r="7.5" fill="#eef4fb" stroke="#9dbbe0" strokeWidth="1.2" /><path d="M8.5 7v6M8.5 4v1.6" stroke="#4a7ab5" strokeWidth="1.2" /></svg>
);

function Backstage() {
  return (
    <div className="absolute left-[1117px] top-[565px] w-[1395px] h-[1184px] bg-white border-l-2 border-t-2 border-[#8a8a8a] rounded-tl-[8px] overflow-hidden flex shadow-[-10px_0_30px_rgba(0,0,0,0.18)] font-['Open_Sans',sans-serif]">
      <div className="w-[210px] shrink-0 bg-[#2b579a] flex flex-col">
        <div className="pt-[72px] pl-[26px] h-[104px] shrink-0">
          <svg width="32" height="32" viewBox="0 0 32 32"><circle cx="16" cy="16" r="15" fill="none" stroke="#fff" strokeWidth="1.4" /><path d="M25 16H8M14 10l-6 6 6 6" fill="none" stroke="#fff" strokeWidth="1.4" /></svg>
        </div>
        <div className="mt-[18px] shrink-0">
          <Side label="Home" icon={<svg width="24" height="24" viewBox="0 0 24 24"><path d="M1 12L12 1l11 11M4 10v13h6v-8h4v8h6V10" fill="none" stroke="#fff" strokeWidth="1.3" /></svg>} />
          <Side label="New" icon={<svg width="18" height="24" viewBox="0 0 18 24"><path d="M1 1h10l6 6v16H1zM11 1v6h6" fill="none" stroke="#fff" strokeWidth="1.2" /></svg>} />
          <Side label="Open" icon={<svg width="24" height="20" viewBox="0 0 24 20"><path d="M1 19V1h7l2 3h10v4M1 19l5-11h17l-5 11z" fill="none" stroke="#fff" strokeWidth="1.2" /></svg>} />
        </div>
        <div className="ml-[30px] w-[150px] h-[2px] bg-[#7d9cc9] mt-[12px] shrink-0" />
        <div className="mt-[11px] shrink-0">
          {["Info", "Save", "Save As"].map((l) => <Side key={l} label={l} />)}
          <Side label="History" dim />
          <Side label="Print" active />
          {["Share", "Export", "Close"].map((l) => <Side key={l} label={l} />)}
        </div>
        <div className="ml-[30px] w-[150px] h-[2px] bg-[#7d9cc9] mt-[173px] shrink-0" />
        <div className="mt-[11px] shrink-0">
          {["Account", "Feedback", "Options"].map((l) => <Side key={l} label={l} />)}
        </div>
      </div>
      <div className="flex-1 flex flex-col min-w-0">
        <div className="h-[49px] shrink-0 flex items-center text-[#a8a8a8] text-[17.5px]">
          <div className="ml-[458px] w-[288px] shrink-0 whitespace-pre">Report1  -  Word</div>
          <Cell w="w-[26px]"><Warn /></Cell>
          <div className="ml-[15px] w-[50px] shrink-0">Lech</div>
          <div className="w-[36px] h-[36px] shrink-0 bg-[#b3b3b3] overflow-hidden">
            <svg width="36" height="36" viewBox="0 0 36 36"><circle cx="18" cy="11" r="7" fill="#fff" /><path d="M5 36c0-12 4-16 9-17h8c5 1 9 5 9 17z" fill="#fff" /></svg>
          </div>
          <Cell w="w-[84px]"><svg width="25" height="25" viewBox="0 0 25 25"><circle cx="12.5" cy="12.5" r="11" fill="none" stroke="#aaa" strokeWidth="1.3" /><circle cx="8.5" cy="10" r="1.2" fill="#999" /><circle cx="16.5" cy="10" r="1.2" fill="#999" /><path d="M7 15c3 4 8 4 11 0" fill="none" stroke="#999" strokeWidth="1.2" /></svg></Cell>
          <Cell w="w-[14px]"><svg width="25" height="25" viewBox="0 0 25 25" className="shrink-0"><circle cx="12.5" cy="12.5" r="11" fill="none" stroke="#aaa" strokeWidth="1.3" /><circle cx="8.5" cy="10" r="1.2" fill="#999" /><circle cx="16.5" cy="10" r="1.2" fill="#999" /><path d="M7 18c3-4 8-4 11 0" fill="none" stroke="#999" strokeWidth="1.2" /></svg></Cell>
          <Cell w="w-[100px]"><span className="text-[18px] text-[#aaa]">?</span></Cell>
          <Cell w="w-[40px]"><div className="w-[16px] h-[2px] bg-[#aaa]" /></Cell>
          <Cell w="w-[96px]"><div className="w-[15px] h-[15px] border-2 border-[#aaa] rounded-[2px]" /></Cell>
        </div>
        <div className="flex-1 flex min-h-0">
          <div className="w-[412px] shrink-0 pl-[67px] flex flex-col">
            <div className="-ml-[7px] mt-[14px] h-[72px] leading-[72px] text-[60px] font-light tracking-[-2.6px] text-[#333]">Print</div>
            <div className="mt-[26px] flex items-start shrink-0">
              <div className="w-[122px] h-[126px] border border-[#ababab] flex flex-col items-center text-[16.5px] font-semibold text-[#333]">
                <svg className="mt-[19px] shrink-0" width="44" height="50" viewBox="0 0 44 50">
                  <rect x="1" y="14" width="42" height="25" rx="3" fill="#7f7f7f" />
                  <rect x="9" y="16" width="26" height="9" fill="#4a7ab5" />
                  <rect x="12" y="1" width="20" height="18" fill="#fff" stroke="#777" />
                  <rect x="12" y="31" width="20" height="18" fill="#fff" stroke="#777" />
                  <path d="M16 38h12M16 42h12" stroke="#4a7ab5" />
                  <rect x="37" y="31" width="3" height="3" fill="#fff" />
                </svg>
                <div className="mt-[8px]">Print</div>
              </div>
              <div className="ml-[26px] h-[37px] flex items-center text-[16.5px] text-[#444]">Copies:</div>
              <div className="ml-[18px] w-[102px] h-[37px] border border-[#ababab] flex items-center justify-between pl-[7px] pr-[6px] text-[17px] text-[#444]">
                <span>1</span>
                <div className="flex flex-col gap-[10px]">
                  <svg width="9" height="6" viewBox="0 0 10 7"><path d="M1 6l4-4.5L9 6" fill="none" stroke="#777" /></svg>
                  <svg width="9" height="6" viewBox="0 0 10 7"><path d="M1 1l4 4.5L9 1" fill="none" stroke="#777" /></svg>
                </div>
              </div>
            </div>
            <div className="mt-[23px] h-[44px] w-[345px] flex justify-between items-start text-[29.5px] font-light leading-[44px] text-[#2b579a]">
              Printer
              <div><Info /></div>
            </div>
            <div className="mt-[3px]">
              <div className="w-[345px] h-[66px] border border-[#ababab] flex items-center text-[17px] text-[#444]">
                <div className="w-[56px] mr-[16px] flex justify-center shrink-0">
                  <svg width="46" height="40" viewBox="0 0 48 44" preserveAspectRatio="none">
                    <path d="M6 6h34l3 7H3z" fill="#5f6a72" /><rect x="15" y="7" width="16" height="3" fill="#46d5c1" />
                    <rect x="2" y="13" width="42" height="20" rx="2" fill="#c9cdd1" /><rect x="10" y="20" width="26" height="14" fill="#333" /><rect x="10" y="28" width="26" height="3" fill="#f1f1f1" />
                    <circle cx="35" cy="32" r="11" fill="#259c24" /><path d="M30 32l4 4 7-7" fill="none" stroke="#fff" strokeWidth="2" />
                  </svg>
                </div>
                <div className="flex-1 leading-[31px]">Canon MF210 Series<br />Ready</div>
                <svg className="mr-[10px] shrink-0" width="12" height="7" viewBox="0 0 12 7"><path d="M0 0h12L6 7z" fill="#222" /></svg>
              </div>
            </div>
            <div className="mt-[7px] h-[24px] w-[341px] flex justify-end items-center text-[16.5px] text-[#2b579a] underline">Printer Properties</div>
            <div className="mt-[19px] h-[44px] text-[29.5px] font-light leading-[44px] text-[#2b579a]">Settings</div>
            <div className="mt-[3px] flex flex-col items-start">
              <SettingBox l1="Print All Pages" l2="The whole thing" icon={<svg width="37" height="45" viewBox="0 0 44 46" preserveAspectRatio="none"><path d="M2 3h28M2 3v40M5 1h28M5 1v42" fill="none" stroke="#999" /><path d="M8 4h25l9 10v30H8z" fill="#fff" stroke="#999" /><path d="M33 4v10h9" fill="none" stroke="#999" /><DocLines x1={12} x2={38} y1={16} y2={40} /></svg>} />
              <div className="h-[37px] mt-[5px] flex items-center w-[345px] text-[17px] text-[#444]">
                <div className="w-[66px]">Pages:</div>
                <div className="w-[256px] h-[37px] border border-[#ababab]" />
                <div className="ml-[6px]"><Info /></div>
              </div>
              <div className="mt-[4px]"><SettingBox l1="Print One Sided" l2="Only print on one side of th..." icon={<svg width="33" height="44" viewBox="0 0 36 44" preserveAspectRatio="none"><path d="M1 1v42M1 1h30" stroke="#999" fill="none" /><rect x="4" y="3" width="31" height="40" fill="#fff" stroke="#999" /><rect x="7" y="6" width="10" height="8" fill="none" stroke="#aaa" /><path d="M20 8h11M20 12h11" stroke="#aaa" /><DocLines x1={8} x2={31} y1={18} y2={40} /></svg>} /></div>
              <div className="mt-[4px]"><SettingBox l1="Collated" l2={"1,2,3     1,2,3     1,2,3"} icon={<svg width="42" height="25" viewBox="0 0 46 28" preserveAspectRatio="none"><path d="M1 2v22M1 2h17M3 1v23" fill="none" stroke="#999" /><rect x="5" y="3" width="17" height="23" fill="#fff" stroke="#999" /><path d="M8 8h11M8 12h11M8 16h11M8 20h11" stroke="#aaa" /><path d="M24 2v22M24 2h17M26 1v23" fill="none" stroke="#999" /><rect x="28" y="3" width="17" height="23" fill="#fff" stroke="#999" /><path d="M31 8h11M31 12h11M31 16h11M31 20h11" stroke="#aaa" /></svg>} /></div>
              <div className="mt-[4px]"><SettingBox l1="Portrait Orientation" icon={<svg width="30" height="41" viewBox="0 0 36 44" preserveAspectRatio="none"><path d="M1 1h24l10 10v32H1z" fill="#fff" stroke="#999" /><path d="M25 1v10h10" fill="none" stroke="#999" /><DocLines x1={5} x2={31} y1={8} y2={40} /></svg>} /></div>
              <div className="mt-[4px]"><SettingBox l1="A4" l2="21 cm x 29.7 cm" icon={<svg width="24" height="35" viewBox="0 0 30 38" preserveAspectRatio="none"><rect x="1" y="1" width="27" height="35" fill="#fff" stroke="#999" /></svg>} /></div>
              <div className="mt-[4px]"><SettingBox l1="Custom Margins" icon={<svg width="32" height="41" viewBox="0 0 38 42" preserveAspectRatio="none"><rect x="1" y="1" width="36" height="40" fill="#fff" stroke="#7f8ba0" /><path d="M9 1v40M29 1v40M1 9h36M1 33h36" stroke="#4a7ab5" /><path d="M19 14l2.5 5 5.5.8-4 3.8 1 5.4-5-2.7-5 2.7 1-5.4-4-3.8 5.5-.8z" fill="#edc77b" /></svg>} /></div>
              <div className="mt-[4px]"><SettingBox l1="1 Page Per Sheet" icon={<svg width="33" height="40" viewBox="0 0 38 42" preserveAspectRatio="none"><rect x="1" y="1" width="36" height="40" fill="#fff" stroke="#999" /><rect x="5" y="5" width="28" height="32" fill="#fff" stroke="#999" /><DocLines x1={8} x2={30} y1={9} y2={34} /></svg>} /></div>
            </div>
            <div className="mt-[6px] h-[24px] w-[341px] flex justify-end items-center text-[17px] text-[#2b579a] underline">Page Setup</div>
          </div>
          <div className="w-[2px] shrink-0 bg-[#e0e0e0] ml-[68px] mt-[112px]" />
          <div className="flex-1 min-w-0 pl-[63px] pt-[141px]">
            <div className="w-[800px] h-[945px] border border-[#c6c6c6] relative overflow-hidden">
              <div className="absolute left-[324px] top-[481px] -translate-x-1/2 -translate-y-1/2 -rotate-45 text-[125px] leading-none text-[#17375e] [-webkit-text-stroke:1.5px_#17375e] font-['Liberation_Sans',sans-serif] whitespace-nowrap">TEST</div>
            </div>
            <div className="mt-[34px] flex items-start text-[13px] text-[#333] h-[20px]">
              <span className="ml-[8px] w-[6px]">‹</span>
              <div className="w-[46px] h-[24px] border border-[#ababab] shrink-0" />
              <span className="ml-[18px] leading-[16px] mt-[7px]">1 of 1</span>
              <span className="ml-[312px] leading-[16px] mt-[7px]">56%</span>
            </div>
          </div>
        </div>
      </div>
    </div>
  );
}

const strip = ["", "a", "a", "", "a", "a", "r", "", "", "", "", "", "r", "a", "", "", "l", "", "N", "", "", "r", "r", "a", "a", "", "a", "a", "", "", "N", "a", "", "", "K"];

export default function App() {
  return (
    <div className="relative w-[2512px] h-[1749px] overflow-hidden bg-[#1e1e1e]">
      <Designer />
      <Viewer />
      <div className="absolute left-0 top-[566px] w-[4px] h-[1183px] bg-[#1e1e1e] overflow-hidden text-[#d9c79a] text-[13px] font-['Liberation_Sans',sans-serif]">
        {strip.map((s, i) => <div key={i} className="h-[23px] leading-[23px] border-b border-[#2c2c2c] -ml-[3px]">{s}</div>)}
      </div>
      <WordDoc />
      <Backstage />
    </div>
  );
}
